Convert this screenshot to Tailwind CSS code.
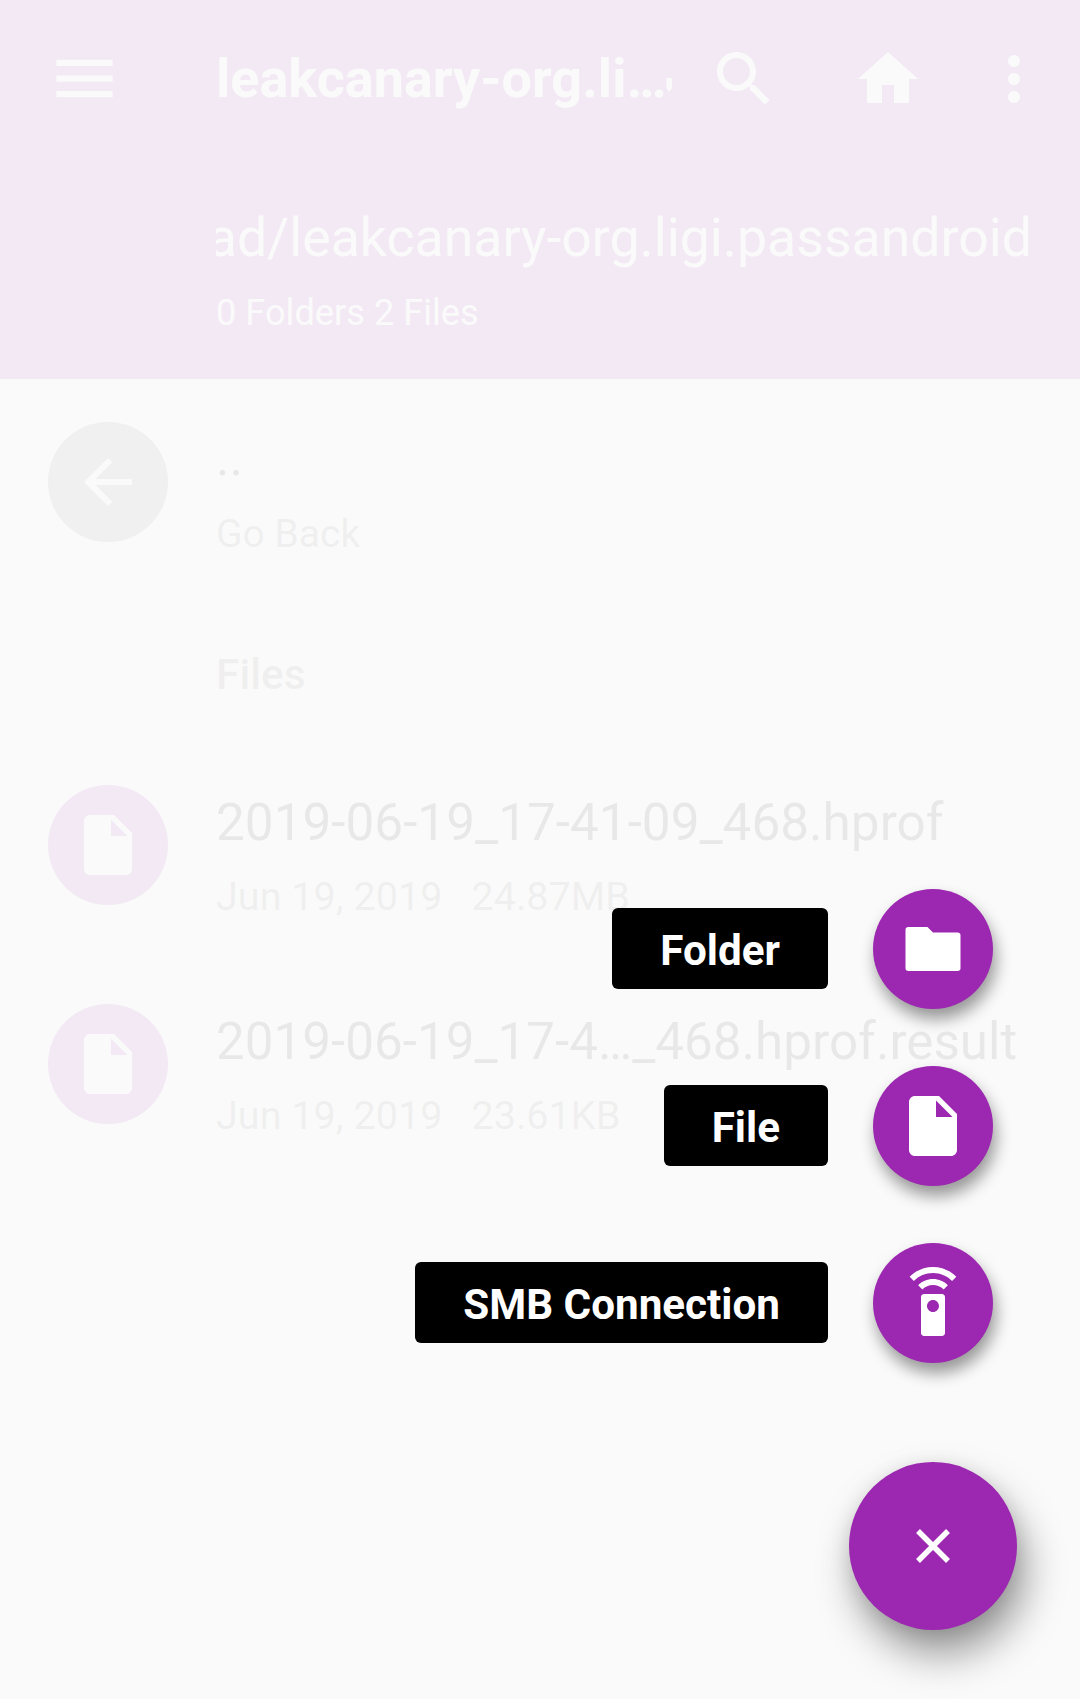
<!doctype html>
<html lang="en">
  <head>
    <meta charset="UTF-8" />
    <meta name="viewport" content="width=device-width, initial-scale=1.0" />
    <title>File Manager</title>
    <script src="https://cdn.jsdelivr.net/npm/@tailwindcss/browser@4"></script>
  </head>
  <body class="bg-[#fafafa] font-['Roboto',sans-serif]">
    <div class="relative h-[1699px] w-[1080px] overflow-hidden">
      <!-- Toolbar and path -->
      <header class="h-[379px] bg-[#9c27b0] text-white">
        <div class="flex items-start pl-[48px] pt-[43px]">
          <svg class="-mx-[1.5px] -mb-[0.5px] -mt-[2.5px] size-[75px] shrink-0" viewBox="0 0 24 24" fill="white"><path d="M3 18h18v-2H3v2zm0-5h18v-2H3v2zm0-7v2h18V6H3z" /></svg>
          <div class="ml-[96px] w-[456px] whitespace-nowrap text-[54px] font-bold leading-[72px]">leakcanary-org.li…<span class="mb-[5px] inline-block h-[14px] w-[6px] bg-white [clip-path:polygon(0_0,100%_0,100%_70%,35%_100%,0_70%)]"></span></div>
          <svg class="ml-[36px] size-[72px] shrink-0" viewBox="0 0 24 24" fill="white"><path d="M15.5 14h-.79l-.28-.27C15.41 12.59 16 11.11 16 9.5 16 5.91 13.09 3 9.5 3S3 5.91 3 9.5 5.91 16 9.5 16c1.61 0 3.09-.59 4.23-1.57l.27.28v.79l5 4.99L20.49 19l-4.99-5zm-6 0C7.01 14 5 11.99 5 9.5S7.01 5 9.5 5 14 7.01 14 9.5 11.99 14 9.5 14z" /></svg>
          <svg class="ml-[72px] size-[72px] shrink-0" viewBox="0 0 24 24" fill="white"><path d="M10 20v-6h4v6h5v-8h3L12 3 2 12h3v8z" /></svg>
          <svg class="ml-[54px] size-[72px] shrink-0" viewBox="0 0 24 24" fill="white"><path d="M12 8c1.1 0 2-.9 2-2s-.9-2-2-2-2 .9-2 2 .9 2 2 2zm0 2c-1.1 0-2 .9-2 2s.9 2 2 2 2-.9 2-2-.9-2-2-2zm0 6c-1.1 0-2 .9-2 2s.9 2 2 2 2-.9 2-2-.9-2-2-2z" /></svg>
        </div>
        <div class="ml-[216px] mt-[87px] flex w-[816px] justify-end overflow-hidden whitespace-nowrap text-[53.6px] leading-[72px]">/storage/emulated/0/Download/leakcanary-org.ligi.passandroid</div>
        <div class="ml-[216px] mt-[9px] text-[36.2px] leading-[60px]">0 Folders 2 Files</div>
      </header>

      <!-- Listing -->
      <main class="pl-[48px] pt-[43px]">
        <div class="flex h-[120px]">
          <div class="flex size-[120px] shrink-0 items-center justify-center rounded-full bg-[#7d7d7d]">
            <svg class="size-[72px]" viewBox="0 0 24 24" fill="white"><path d="M20 11H7.83l5.59-5.59L12 4l-8 8 8 8 1.41-1.41L7.83 13H20v-2z" /></svg>
          </div>
          <div class="ml-[48px] text-black/87">
            <div class="text-[51px] leading-[72px]">..</div>
            <div class="mt-[4px] text-[39px] leading-[72px] text-black/54">Go Back</div>
          </div>
        </div>

        <div class="ml-[168px] mt-[97px] text-[42.5px] font-medium leading-[72px] text-black/54">Files</div>

        <div class="mt-[74px] flex h-[120px]">
          <div class="flex size-[120px] shrink-0 items-center justify-center rounded-full bg-[#9c27b0]">
            <svg class="size-[72px]" viewBox="0 0 24 24" fill="white"><path d="M6 2c-1.1 0-2 .9-2 2v16c0 1.1.9 2 2 2h12c1.1 0 2-.9 2-2V8l-6-6H6zm7 7V3.5L18.5 9H13z" /></svg>
          </div>
          <div class="ml-[48px] whitespace-nowrap">
            <div class="mt-[2px] text-[51.3px] leading-[72px] text-black/87">2019-06-19_17-41-09_468.hprof</div>
            <div class="mt-[2px] flex gap-[29px] text-[39.6px] leading-[72px] text-black/54"><span>Jun 19, 2019</span><span>24.87MB</span></div>
          </div>
        </div>

        <div class="mt-[99px] flex h-[120px]">
          <div class="flex size-[120px] shrink-0 items-center justify-center rounded-full bg-[#9c27b0]">
            <svg class="size-[72px]" viewBox="0 0 24 24" fill="white"><path d="M6 2c-1.1 0-2 .9-2 2v16c0 1.1.9 2 2 2h12c1.1 0 2-.9 2-2V8l-6-6H6zm7 7V3.5L18.5 9H13z" /></svg>
          </div>
          <div class="ml-[48px] whitespace-nowrap">
            <div class="mt-[2px] text-[51.2px] leading-[72px] text-black/87">2019-06-19_17-4…_468.hprof.result</div>
            <div class="mt-[2px] flex gap-[29px] text-[39.6px] leading-[72px] text-black/54"><span>Jun 19, 2019</span><span>23.61KB</span></div>
          </div>
        </div>
      </main>

      <!-- Scrim while the speed dial is open -->
      <div class="absolute inset-0 bg-[#fafafa]/[0.92]"></div>

      <!-- Speed dial -->
      <div class="absolute bottom-[69px] right-[63px] flex flex-col items-end">
        <div class="mr-[24px] flex items-center gap-[45px]">
          <span class="mb-[2px] h-[81px] rounded-[6px] bg-black px-[48px] text-[42.2px] font-bold leading-[85px] text-white">Folder</span>
          <button class="flex size-[120px] items-center justify-center rounded-full bg-[#9c27b0] shadow-[3px_10px_16px_rgba(0,0,0,0.4)]">
            <svg class="size-[66px]" viewBox="0 0 24 24" fill="white"><path d="M10 4H3c-.6 0-1 .4-1 1v14c0 .6.4 1 1 1h18c.6 0 1-.4 1-1V7c0-.6-.4-1-1-1h-9l-2-2z" /></svg>
          </button>
        </div>
        <div class="mr-[24px] mt-[57px] flex items-center gap-[45px]">
          <span class="mb-[2px] h-[81px] rounded-[6px] bg-black px-[48px] text-[42.2px] font-bold leading-[85px] text-white">File</span>
          <button class="flex size-[120px] items-center justify-center rounded-full bg-[#9c27b0] shadow-[3px_10px_16px_rgba(0,0,0,0.4)]">
            <svg class="size-[72px]" viewBox="0 0 24 24" fill="white"><path d="M6 2c-1.1 0-2 .9-2 2v16c0 1.1.9 2 2 2h12c1.1 0 2-.9 2-2V8l-6-6H6zm7 7V3.5L18.5 9H13z" /></svg>
          </button>
        </div>
        <div class="mr-[24px] mt-[57px] flex items-center gap-[45px]">
          <span class="mb-[2px] h-[81px] rounded-[6px] bg-black px-[48px] text-[42.2px] font-bold leading-[85px] text-white">SMB Connection</span>
          <button class="flex size-[120px] items-center justify-center rounded-full bg-[#9c27b0] shadow-[3px_10px_16px_rgba(0,0,0,0.4)]">
            <svg class="size-[72px]" viewBox="0 0 24 24" fill="white"><path d="M15 9H9c-.55 0-1 .45-1 1v12c0 .55.45 1 1 1h6c.55 0 1-.45 1-1V10c0-.55-.45-1-1-1zm-3 6c-1.1 0-2-.9-2-2s.9-2 2-2 2 .9 2 2-.9 2-2 2zM7.05 6.05l1.41 1.41C9.37 6.56 10.62 6 12 6s2.63.56 3.54 1.46l1.41-1.41C15.68 4.78 13.93 4 12 4s-3.68.78-4.95 2.05zM12 0C8.96 0 6.21 1.23 4.22 3.22l1.41 1.41C7.26 3.01 9.51 2 12 2s4.74 1.01 6.36 2.64l1.41-1.41C17.79 1.23 15.04 0 12 0z" /></svg>
          </button>
        </div>
        <button class="mt-[99px] flex size-[168px] items-center justify-center rounded-full bg-[#9c27b0] shadow-[8px_24px_40px_rgba(0,0,0,0.4),0_4px_20px_rgba(0,0,0,0.1)]">
          <svg class="size-[34px]" viewBox="0 0 34 34" fill="none" stroke="white" stroke-width="5.5"><path d="M2 2l30 30M32 2L2 32" /></svg>
        </button>
      </div>
    </div>
  </body>
</html>
